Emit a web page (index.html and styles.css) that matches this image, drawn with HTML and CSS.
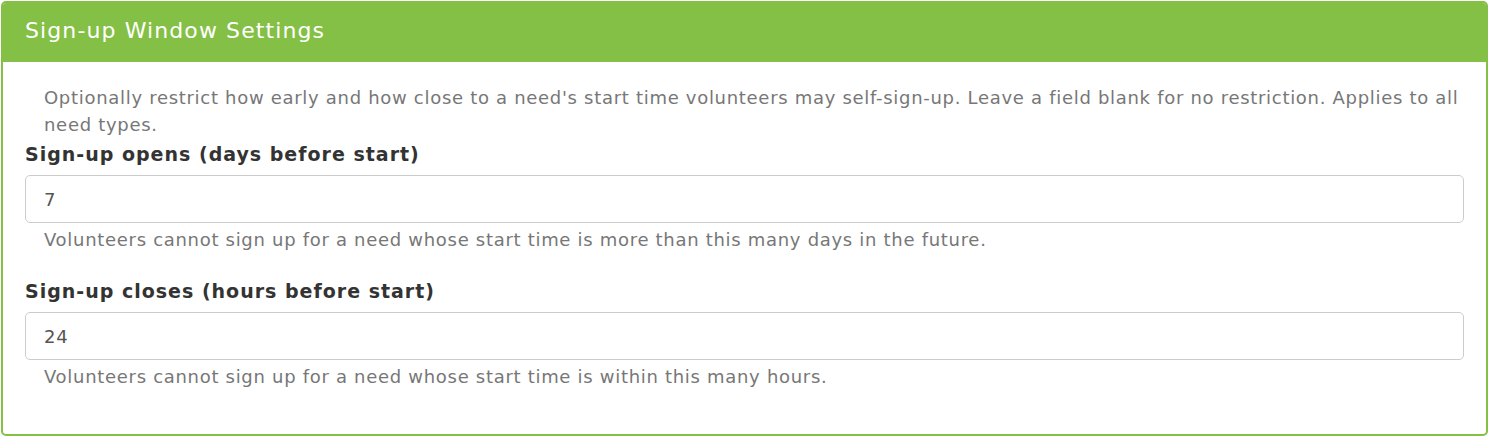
FILE: index.html
```html
<!DOCTYPE html>
<html lang="en">
<head>
<meta charset="UTF-8">
<meta name="viewport" content="width=device-width, initial-scale=1.0">
<title>Sign-up Window Settings</title>
<link rel="stylesheet" href="styles.css">
</head>
<body>

<div class="panel">
    <div class="panel-heading">Sign-up Window Settings</div>
    <div class="panel-body">
        <p class="intro">Optionally restrict how early and how close to a need's start time volunteers may self-sign-up. Leave a field blank for no restriction. Applies to all need types.</p>

        <div class="form-group">
            <label for="opens">Sign-up opens (days before start)</label>
            <input type="text" id="opens" class="form-control" value="7">
            <span class="help-block">Volunteers cannot sign up for a need whose start time is more than this many days in the future.</span>
        </div>

        <div class="form-group">
            <label for="closes">Sign-up closes (hours before start)</label>
            <input type="text" id="closes" class="form-control" value="24">
            <span class="help-block">Volunteers cannot sign up for a need whose start time is within this many hours.</span>
        </div>
    </div>
</div>

</body>
</html>
```

FILE: styles.css
```css
body {
    margin: 1px 1px 0;
    background: #ffffff;
    font-family: 'DejaVu Sans', Verdana, sans-serif;
    font-size: 18px;
    letter-spacing: 0.7px;
    color: #333333;
    overflow: hidden;
}

.panel {
    border: 2px solid #84c045;
    border-radius: 5px;
    height: 435px;
    box-sizing: border-box;
    overflow: hidden;
}

.panel-heading {
    background-color: #84c045;
    color: #ffffff;
    font-size: 22px;
    letter-spacing: 1.1px;
    height: 59px;
    line-height: 56px;
    padding: 0 22px;
}

.panel-body {
    padding: 22px 22px 0;
}

.intro {
    color: #777777;
    margin: 0 0 3px;
    padding: 0 0 0 19px;
    line-height: 27px;
}

.form-group {
    margin-bottom: 25px;
}

.form-group label {
    display: block;
    font-weight: bold;
    font-size: 19px;
    letter-spacing: 1px;
    line-height: 26px;
    margin-bottom: 8px;
}

.form-control {
    display: block;
    box-sizing: border-box;
    width: 100%;
    height: 48px;
    padding: 0 18px;
    border: 1px solid #cccccc;
    border-radius: 5px;
    font-family: inherit;
    font-size: 18px;
    letter-spacing: 0.7px;
    color: #555555;
}

.help-block {
    display: block;
    color: #777777;
    padding-left: 19px;
    margin-top: 4px;
    line-height: 26px;
}
```
